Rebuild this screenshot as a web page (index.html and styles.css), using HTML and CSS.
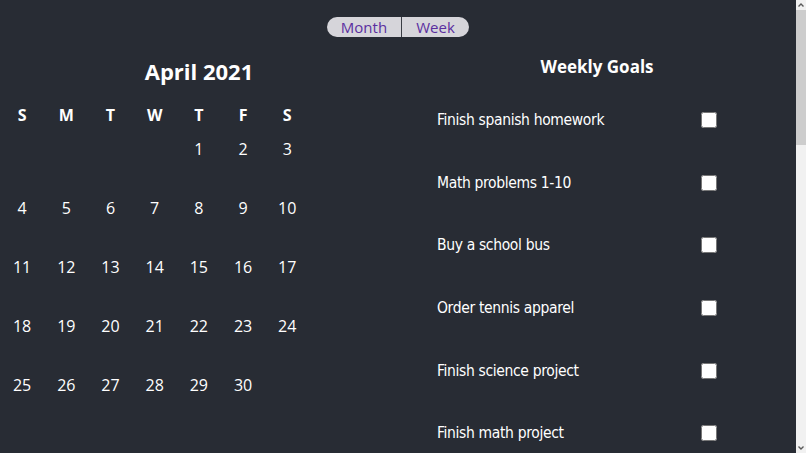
FILE: index.html
```html
<!DOCTYPE html>
<html>
<head>
<meta charset="utf-8">
<link rel="stylesheet" href="styles.css">
</head>
<body>
<div class="app">
  <div class="toggle">
    <button class="tbtn left">Month</button><button class="tbtn right">Week</button>
  </div>
  <div class="main">
    <section class="calendar">
      <h1 class="month-title">April 2021</h1>
      <div class="grid">
        <div class="dow">S</div><div class="dow">M</div><div class="dow">T</div><div class="dow">W</div><div class="dow">T</div><div class="dow">F</div><div class="dow">S</div>
        <div class="day"></div><div class="day"></div><div class="day"></div><div class="day"></div><div class="day">1</div><div class="day">2</div><div class="day">3</div>
        <div class="day">4</div><div class="day">5</div><div class="day">6</div><div class="day">7</div><div class="day">8</div><div class="day">9</div><div class="day">10</div>
        <div class="day">11</div><div class="day">12</div><div class="day">13</div><div class="day">14</div><div class="day">15</div><div class="day">16</div><div class="day">17</div>
        <div class="day">18</div><div class="day">19</div><div class="day">20</div><div class="day">21</div><div class="day">22</div><div class="day">23</div><div class="day">24</div>
        <div class="day">25</div><div class="day">26</div><div class="day">27</div><div class="day">28</div><div class="day">29</div><div class="day">30</div><div class="day"></div>
      </div>
    </section>
    <section class="goals">
      <h2 class="goals-title">Weekly Goals</h2>
      <ul class="goal-list">
        <li class="goal"><span class="goal-text">Finish spanish homework</span><input type="checkbox" class="goal-check"></li>
        <li class="goal"><span class="goal-text">Math problems 1-10</span><input type="checkbox" class="goal-check"></li>
        <li class="goal"><span class="goal-text">Buy a school bus</span><input type="checkbox" class="goal-check"></li>
        <li class="goal"><span class="goal-text">Order tennis apparel</span><input type="checkbox" class="goal-check"></li>
        <li class="goal"><span class="goal-text">Finish science project</span><input type="checkbox" class="goal-check"></li>
        <li class="goal"><span class="goal-text">Finish math project</span><input type="checkbox" class="goal-check"></li>
      </ul>
    </section>
  </div>
</div>
<div class="scrollbar">
  <div class="sb-arrow">
    <svg width="10" height="10" viewBox="0 0 10 10"><path d="M2.5 6.5 L5 4 L7.5 6.5" fill="none" stroke="#5a5a5a" stroke-width="1.4"/></svg>
  </div>
  <div class="sb-track"><div class="sb-thumb"></div></div>
  <div class="sb-arrow">
    <svg width="10" height="10" viewBox="0 0 10 10"><path d="M2.5 3.5 L5 6 L7.5 3.5" fill="none" stroke="#5a5a5a" stroke-width="1.4"/></svg>
  </div>
</div>
</body>
</html>
```
FILE: styles.css
```css
html {
  background: #282c34;
}
body {
  margin: 0;
  background: #282c34;
  color: #ffffff;
  font-family: "Open Sans", "Noto Sans", sans-serif;
  height: 453px;
  overflow: hidden;
}
.app {
  width: calc(100% - 10px);
  padding-top: 17px;
}
.toggle {
  display: flex;
  justify-content: center;
}
.tbtn {
  font-family: "Open Sans", sans-serif;
  font-size: 15px;
  line-height: 18px;
  height: 20px;
  padding: 0;
  border: none;
  background: #d6d5da;
  color: #5b2fa0;
  margin: 0;
}
.tbtn.left {
  width: 75px;
  border-radius: 10px 0 0 10px;
  border-right: 1px solid #3a3d44;
}
.tbtn.right {
  width: 67px;
  border-radius: 0 10px 10px 0;
}
.main {
  display: grid;
  grid-template-columns: 1fr 1fr;
}
.calendar {
  display: flex;
  flex-direction: column;
}
.month-title {
  margin: 0;
  margin-top: 19px;
  text-align: center;
  font-size: 22px;
  font-weight: 700;
  line-height: 30px;
}
.grid {
  display: grid;
  grid-template-columns: repeat(7, 44.2px);
  grid-template-rows: 34px;
  grid-auto-rows: 59px;
  margin-top: 18px;
}
.dow, .day {
  text-align: center;
  font-size: 16px;
  line-height: 22px;
}
.dow {
  font-weight: 700;
}
.goals {
  display: flex;
  flex-direction: column;
}
.goals-title {
  margin: 0;
  margin-top: 18px;
  text-align: center;
  font-size: 17px;
  font-weight: 700;
  line-height: 24px;
}
.goal-list {
  list-style: none;
  margin: 0;
  padding: 0 0 0 39px;
  margin-top: 10px;
}
.goal {
  display: flex;
  align-items: center;
  width: 280px;
  justify-content: space-between;
  height: 62.6px;
  font-family: "DejaVu Sans Condensed", "DejaVu Sans", sans-serif;
  font-size: 15.5px;
  letter-spacing: -0.35px;
}
.goal-check {
  width: 16px;
  height: 16px;
  margin: 0;
}
.scrollbar {
  position: fixed;
  top: 0;
  right: 0;
  width: 10px;
  height: 100%;
  background: #f1f1f1;
  display: flex;
  flex-direction: column;
}
.sb-arrow {
  height: 10px;
  display: flex;
}
.sb-track {
  flex: 1;
}
.sb-thumb {
  height: 135px;
  background: #cdcdcd;
}
```
